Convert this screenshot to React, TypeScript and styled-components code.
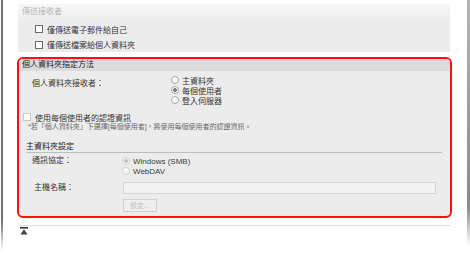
import React, { FC } from 'react';
import styled, { createGlobalStyle } from 'styled-components';

const GlobalStyle = createGlobalStyle`
    html, body {
        margin: 0;
        padding: 0;
        background: #ffffff;
    }
    body {
        font-family: "Liberation Sans", "Noto Sans CJK TC", sans-serif;
        font-size: 8px;
        color: #333333;
    }
`;

const Page = styled.div`
    width: 470px;
    height: 259px;
    display: flex;
    overflow: hidden;
`;

const LeftRule = styled.div`
    width: 2px;
    margin-left: 1px;
    background: linear-gradient(to bottom, #6f6f6f 0%, #6f6f6f 85%, rgba(120, 120, 120, 0) 97%);
`;

const RightRule = styled.div`
    width: 3px;
    background: linear-gradient(to bottom, #b4b4b4 0%, #8a8a8a 80%, rgba(140, 140, 140, 0) 95%);
`;

const Main = styled.div`
    flex: 1;
    display: flex;
    flex-direction: column;
    padding: 0 15px 0 14px;
`;

const TopPanel = styled.div`
    margin: 4px 2px 0 1px;
    background: #ececec;
    height: 48px;
    display: flex;
    flex-direction: column;
`;

const TopHeader = styled.div`
    height: 16px;
    line-height: 16px;
    padding-left: 4px;
    color: #b4b4b4;
    background: linear-gradient(to bottom, #f7f7f7, #eeeeee);
`;

const CheckRow = styled.label<{ indent: number; height?: number }>`
    display: flex;
    align-items: center;
    gap: 4px;
    height: ${(p) => p.height ?? 16}px;
    padding-left: ${(p) => p.indent}px;
    white-space: nowrap;
`;

const CheckBox = styled.span<{ faded?: boolean }>`
    width: 6px;
    height: 6px;
    border: 1px solid ${(p) => (p.faded ? '#c8c8c8' : '#6a6a6a')};
    background: #ffffff;
    flex-shrink: 0;
`;

const RedBox = styled.div`
    margin-top: 5px;
    border: 2px solid #ff1010;
    border-radius: 6px;
    background: #ececec;
    overflow: hidden;
    padding-bottom: 4px;
`;

const SectionHeader = styled.div`
    height: 12px;
    line-height: 12px;
    padding-left: 3px;
    background: #dcdcdc;
    color: #222222;
`;

const FieldRow = styled.div<{ top: number; labelWidth: number; indent: number }>`
    display: grid;
    grid-template-columns: ${(p) => p.labelWidth}px 1fr;
    margin-top: ${(p) => p.top}px;
    padding-left: ${(p) => p.indent}px;
    padding-right: 6px;
`;

const FieldLabel = styled.div<{ offset?: number }>`
    line-height: 10px;
    padding-top: ${(p) => p.offset ?? 0}px;
    white-space: nowrap;
`;

const RadioGroup = styled.div`
    display: flex;
    flex-direction: column;
`;

const RadioItem = styled.label<{ disabled?: boolean }>`
    display: flex;
    align-items: center;
    gap: 3px;
    height: 10px;
    color: ${(p) => (p.disabled ? '#3c3c3c' : '#333333')};
    white-space: nowrap;
`;

const RadioCircle = styled.span<{ checked?: boolean; disabled?: boolean }>`
    width: 6px;
    height: 6px;
    border-radius: 50%;
    border: 1px solid ${(p) => (p.disabled ? '#d4d4d4' : '#a8a8a8')};
    background: ${(p) =>
        p.checked
            ? p.disabled
                ? 'radial-gradient(circle, #c4c4c4 0 1.6px, #f4f4f4 2.2px)'
                : 'radial-gradient(circle, #7a7a7a 0 1.6px, #f8f8f8 2.2px)'
            : 'linear-gradient(to bottom, #ffffff, #f0f0f0)'};
    flex-shrink: 0;
`;

const Note = styled.div`
    height: 10px;
    line-height: 10px;
    padding-left: 9px;
    font-size: 7px;
    color: #6a6a6a;
    white-space: nowrap;
`;

const SubSection = styled.div`
    margin: 10px 8px 0 7px;
`;

const SubHeader = styled.div`
    line-height: 10px;
    border-bottom: 1px solid #bdbdbd;
    color: #222222;
`;

const TextInput = styled.div`
    height: 10px;
    border: 1px solid #d6d6d6;
    background: #f2f2f2;
`;

const SettingButton = styled.div`
    width: 32px;
    height: 11px;
    line-height: 11px;
    margin: 5px 0 0 97px;
    border: 1px solid #cfcfcf;
    color: #bcbcbc;
    font-size: 7px;
    text-align: center;
    background: #efefef;
`;

const Divider = styled.div`
    margin: 7px 2px 0 1px;
    height: 1px;
    background: #dedede;
`;

const TopLink = styled.div`
    margin: 1px 0 0 3px;
    display: flex;
`;

const options = ['主資料夾', '每個使用者', '登入伺服器'];

const App: FC = () => {
    return (
        <Page>
            <GlobalStyle />
            <LeftRule />
            <Main>
                <TopPanel>
                    <TopHeader>傳送接收者</TopHeader>
                    <CheckRow indent={17} style={{ marginTop: 1 }}>
                        <CheckBox />
                        僅傳送電子郵件給自己
                    </CheckRow>
                    <CheckRow indent={17} height={15}>
                        <CheckBox />
                        僅傳送檔案給個人資料夾
                    </CheckRow>
                </TopPanel>

                <RedBox>
                    <SectionHeader>個人資料夾指定方法</SectionHeader>
                    <FieldRow top={4} labelWidth={139} indent={13}>
                        <FieldLabel offset={4}>個人資料夾接收者：</FieldLabel>
                        <RadioGroup>
                            {options.map((name, i) => (
                                <RadioItem key={name}>
                                    <RadioCircle checked={i === 1} />
                                    {name}
                                </RadioItem>
                            ))}
                        </RadioGroup>
                    </FieldRow>
                    <CheckRow indent={4} height={10} style={{ marginTop: 7 }}>
                        <CheckBox faded />
                        使用每個使用者的認證資訊
                    </CheckRow>
                    <Note>*若「個人資料夾」下選擇[每個使用者]，將使用每個使用者的認證資訊。</Note>

                    <SubSection>
                        <SubHeader>主資料夾設定</SubHeader>
                        <FieldRow top={3} labelWidth={90} indent={6}>
                            <FieldLabel offset={0}>通訊協定：</FieldLabel>
                            <RadioGroup>
                                <RadioItem disabled>
                                    <RadioCircle checked disabled />
                                    Windows (SMB)
                                </RadioItem>
                                <RadioItem disabled>
                                    <RadioCircle disabled />
                                    WebDAV
                                </RadioItem>
                            </RadioGroup>
                        </FieldRow>
                        <FieldRow top={6} labelWidth={89} indent={8}>
                            <FieldLabel offset={1}>主機名稱：</FieldLabel>
                            <TextInput />
                        </FieldRow>
                        <SettingButton>設定...</SettingButton>
                    </SubSection>
                </RedBox>

                <Divider />
                <TopLink>
                    <svg width="8" height="8" viewBox="0 0 8 8">
                        <rect x="0" y="0" width="8" height="1.6" fill="#333" />
                        <polygon points="4,2.2 0.5,7.5 7.5,7.5" fill="#444" />
                    </svg>
                </TopLink>
            </Main>
            <RightRule />
        </Page>
    );
};

export default App;
